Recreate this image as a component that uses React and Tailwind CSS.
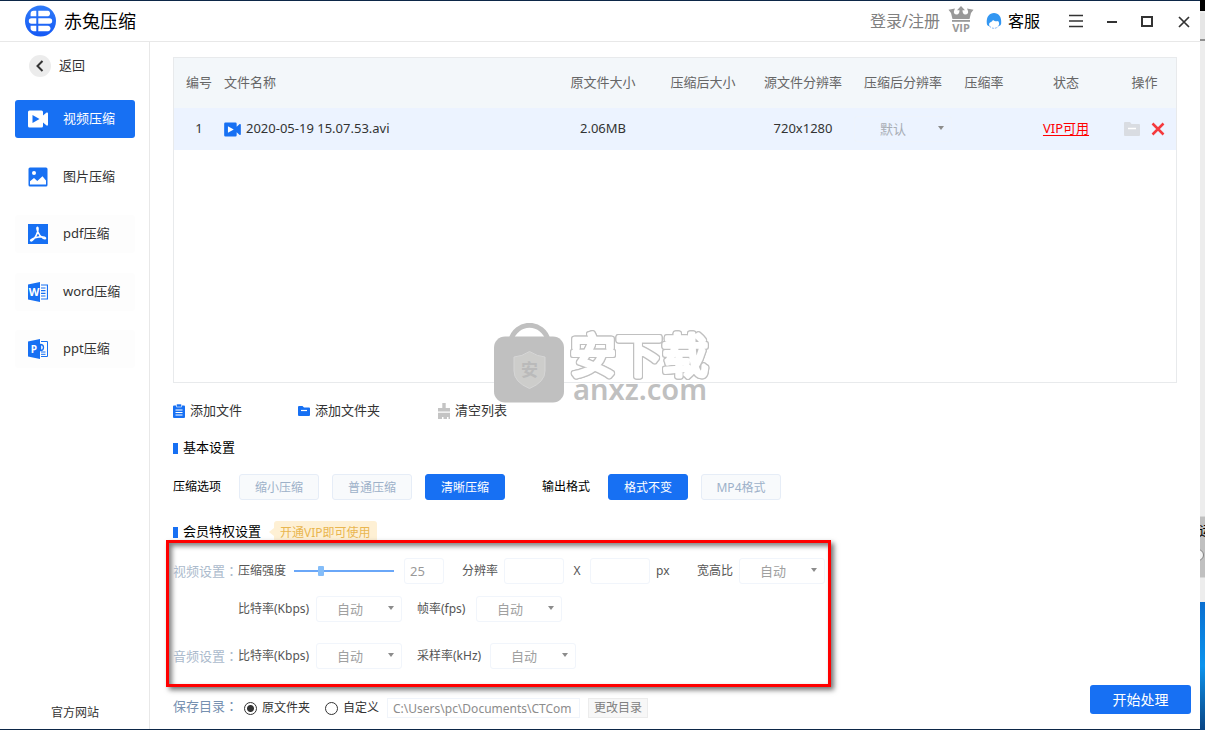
import React, { useState } from 'react';

const LogoIcon = () => (
    <svg viewBox="0 0 32 32" className="w-8 h-8 shrink-0">
        <defs>
            <linearGradient id="logo" x1="0" y1="0" x2="0" y2="1">
                <stop offset="0" stopColor="#2f7bf8" />
                <stop offset="1" stopColor="#1559f5" />
            </linearGradient>
        </defs>
        <circle cx="15.500" cy="16" r="15.500" fill="url(#logo)" />
        <g fill="#fff">
            <path d="M11.3 5.8H8.6a3 3 0 0 0-3 3V11.300h5.700zM13.300 5.800h10a3 3 0 0 1 0 5.500h-10z" />
            <path d="M11.300 13.300H6.500a2.700 2.700 0 0 0 0 5.400h4.800zM13.300 13.300h11.200a2.700 2.700 0 0 1 0 5.400H13.300z" />
            <path d="M11.300 20.700H5.600v1.500a3.500 3.500 0 0 0 3 4h2.700zM13.300 20.700h10a2.800 2.800 0 0 1 0 5.500h-10z" />
        </g>
    </svg>
);

const VideoIcon = ({ className, bg, fg }) => (
    <svg viewBox="0 0 20 18" className={className}>
        <path d="M1.500 0.500h12a1.500 1.500 0 0 1 1.500 1.500v3.600l3.600-3.100q1.400-.5 1.400 1v11q0 1.500-1.400 1L15 12.400V16a1.500 1.500 0 0 1-1.500 1.500h-12A1.500 1.500 0 0 1 0 16V2A1.500 1.500 0 0 1 1.500.5z" fill={bg} />
        <path d="M4.500 5l7 4-7 4z" fill={fg} />
    </svg>
);

const ImageIcon = () => (
    <svg viewBox="0 0 20 20" className="w-5 h-5">
        <rect x="0.500" y="0.500" width="19" height="19" rx="1.500" fill="#1770f3" />
        <circle cx="6" cy="6" r="2" fill="#fff" />
        <path d="M2 17.500v-3.200l4-3.300 3.300 3 5.200-4.800 3.500 4.300v4z" fill="#fff" />
    </svg>
);

const PdfIcon = () => (
    <svg viewBox="0 0 20 20" className="w-5 h-5">
        <rect width="20" height="20" fill="#1770f3" />
        <path
            d="M9.600 3.200c-1 0-.9 2 .2 4.500.8 2.200 3 5.300 5.500 6.700 1.500.7 2.500.4 2.200-.4-.4-.9-3.500-1.500-6.700-1.100-3.300.4-6.700 1.700-8 3.100-.6.800.3 1.300 1.500.4 2-1.500 4.300-5.300 5.300-8.600.6-2.300.7-4.500 0-4.600z"
            fill="none" stroke="#fff" strokeWidth="1.500"
        />
    </svg>
);

const WordIcon = () => (
    <svg viewBox="0 0 20 20" className="w-5 h-5">
        <path d="M0 2.500L12 0v20L0 17.500z" fill="#1770f3" />
        <path d="M13 3h6.500v14H13M13 6h4.500M13 8.700h4.500M13 11.300h4.500M13 14h4.500" fill="none" stroke="#1770f3" strokeWidth="1.200" />
        <text x="6" y="13.800" textAnchor="middle" fontSize="11" fontWeight="700" fontFamily="Open Sans, sans-serif" fill="#fff">W</text>
    </svg>
);

const PptIcon = () => (
    <svg viewBox="0 0 20 20" className="w-5 h-5">
        <path d="M0 2.500L12 0v20L0 17.500z" fill="#1770f3" />
        <path d="M13 2.500h6.500v15H13M13 13h4.500M13 15.300h4.500" fill="none" stroke="#1770f3" strokeWidth="1" />
        <path d="M12.500 5.500a3 3 0 1 1 0 6z" fill="none" stroke="#1770f3" strokeWidth="1.300" />
        <text x="5.800" y="13.500" textAnchor="middle" fontSize="10" fontWeight="700" fontFamily="Open Sans, sans-serif" fill="#fff">P</text>
    </svg>
);

const CrownIcon = () => (
    <svg viewBox="0 0 26 26" className="w-[26px] h-[26px]">
        <g fill="#999">
            <path d="M13 0l4 4.300h-2.500c0 2.500.8 4.200 2.800 4.200 2.200 0 3.300-1.500 2.700-3.500l-1-2.500 6.500 1.200-2.500 3.300L21.500 13h-17L3 7 .5 3.700 7 2.500 6 5c-.6 2 .5 3.500 2.700 3.500 2 0 2.800-1.700 2.800-4.200H9z" />
            <rect x="4" y="14" width="18" height="1.800" />
            <text x="13" y="25.500" textAnchor="middle" fontSize="11" fontWeight="700" fontFamily="Open Sans, sans-serif">VIP</text>
        </g>
    </svg>
);

const ServiceIcon = () => (
    <svg viewBox="0 0 16 18" className="w-4 h-[18px]">
        <circle cx="8" cy="10.500" r="5.800" fill="#fff" stroke="#7fb4f5" strokeWidth="1" strokeDasharray="2 1" />
        <path d="M.8 11.500C.2 4.500 3.500 1 8 1s7.800 3.500 7.200 10.500c-.3 1.800-1.600 2.500-2.600 2.500 1-2 .6-4-.6-5-2 .6-3.500 0-5-1-1 2-3 2-3.800 3.500-.3 1 0 2 .4 2.700C2 14.200 1 13.500.8 11.500z" fill="#3397f2" />
    </svg>
);

const Caret = () => (
    <svg viewBox="0 0 6 4" className="absolute right-2 top-1/2 -mt-[3px] w-[6px] h-1 pointer-events-none">
        <path d="M0 0h6L3 4z" fill="#8c8c8c" />
    </svg>
);

const Dropdown = ({ label, value, className }) => (
    <span className={`relative inline-block ${className}`}>
        <select
            aria-label={label}
            className="block w-full h-[26px] pl-5 appearance-none rounded-[3px] border border-[#f1f5fb] bg-transparent text-[13px] leading-6 text-[#a0a0a0]"
        >
            <option>{value}</option>
        </select>
        <Caret />
    </span>
);

const GroupLabel = ({ children, className }) => (
    <span className={`w-[65px] shrink-0 whitespace-nowrap text-[13px] ${className}`}>
        {children}
        <span className="font-['Noto_Sans_CJK_TC',sans-serif]">：</span>
    </span>
);

const SectionTitle = ({ children }) => (
    <h2 className="flex items-center gap-[5px] text-[13px] text-black">
        <span className="w-[5px] h-[11px] bg-[#1770f3]"></span>
        {children}
    </h2>
);

const OptionButton = ({ active, onClick, children }) => (
    <button
        onClick={onClick}
        className={`w-20 h-[26px] pt-px rounded-[3px] border text-xs ${
            active ? 'bg-[#1770f3] border-[#1770f3] text-white' : 'bg-[#f8fafc] border-[#e6edf7] text-[#9db1c9]'
        }`}
    >
        {children}
    </button>
);

const navItems = [
    { name: '视频压缩', icon: <VideoIcon className="w-5 h-[18px]" bg="#fff" fg="#1770f3" />, style: 'bg-[#1770f3] text-white' },
    { name: '图片压缩', icon: <ImageIcon />, style: 'text-[#333]' },
    { name: 'pdf压缩', icon: <PdfIcon />, style: 'bg-[#fdfdfd] text-[#333]' },
    { name: 'word压缩', icon: <WordIcon />, style: 'bg-[#fdfdfd] text-[#333]' },
    { name: 'ppt压缩', icon: <PptIcon />, style: 'bg-[#fdfdfd] text-[#333]' },
];

const Header = () => (
    <header className="flex items-center h-[41px] pl-[25px] pr-2 border-b border-[#e8e8e8]">
        <LogoIcon />
        <h1 className="ml-[7px] text-lg leading-6 text-black">赤兔压缩</h1>
        <div className="ml-auto flex items-center">
            <a href="#login" className="text-base text-[#808080]">登录/注册</a>
            <button aria-label="VIP" className="ml-2 -mt-1"><CrownIcon /></button>
            <a href="#service" className="ml-3 flex items-center gap-[6px] text-base text-black">
                <ServiceIcon />
                客服
            </a>
            <div className="ml-7 flex items-center gap-5">
                <button aria-label="菜单">
                    <svg viewBox="0 0 16 16" className="w-4 h-4" stroke="#333" strokeWidth="1.500"><path d="M1 2.500h14M1 8h14M1 13.500h14" /></svg>
                </button>
                <button aria-label="最小化">
                    <svg viewBox="0 0 16 16" className="w-4 h-4" stroke="#333" strokeWidth="2"><path d="M3 9h10" /></svg>
                </button>
                <button aria-label="最大化">
                    <svg viewBox="0 0 16 16" className="w-4 h-4" stroke="#333" strokeWidth="2" fill="none"><path d="M2 4h10v9H2z" /></svg>
                </button>
                <button aria-label="关闭">
                    <svg viewBox="0 0 16 16" className="w-4 h-4" stroke="#333" strokeWidth="1.700"><path d="M3 4l10 10M13 4L3 14" /></svg>
                </button>
            </div>
        </div>
    </header>
);

const Sidebar = () => (
    <aside className="flex flex-col w-[150px] shrink-0 px-[15px] pt-[13px] pb-[7px] border-r border-[#e8e8e8]">
        <button className="flex items-center gap-2 pl-[14px] text-[13px] text-[#333]">
            <span className="flex items-center justify-center w-[22px] h-[22px] rounded-full bg-[#ececec]">
                <svg viewBox="0 0 10 12" className="w-[10px] h-3" fill="none" stroke="#333" strokeWidth="2"><path d="M7.500 1L2.500 6l5 5" /></svg>
            </span>
            返回
        </button>
        <nav className="mt-[23px] h-[268px] w-[120px] flex flex-col justify-between">
            {navItems.map((item) => (
                <a
                    key={item.name}
                    href="#nav"
                    className={`flex items-center gap-[15px] h-[38px] pl-[13px] rounded-[3px] text-[13px] ${item.style}`}
                >
                    {item.icon}
                    {item.name}
                </a>
            ))}
        </nav>
        <a href="#site" className="mt-auto w-[120px] text-center text-xs leading-[18px] text-[#333]">官方网站</a>
    </aside>
);

const FileTable = () => (
    <div className="flex-1 mr-[23px] border border-[#e8eaec]">
        <table className="w-full table-fixed text-[13px] text-center">
            <colgroup>
                <col className="w-[50px]" />
                <col />
                <col className="w-[100px]" />
                <col className="w-[100px]" />
                <col className="w-[100px]" />
                <col className="w-[100px]" />
                <col className="w-[62px]" />
                <col className="w-[102px]" />
                <col className="w-[59px]" />
            </colgroup>
            <thead>
                <tr className="h-[50px] bg-[#f3f7fa] text-[#666] [&>th]:font-normal">
                    <th>编号</th>
                    <th className="text-left">文件名称</th>
                    <th>原文件大小</th>
                    <th>压缩后大小</th>
                    <th>源文件分辨率</th>
                    <th>压缩后分辨率</th>
                    <th>压缩率</th>
                    <th>状态</th>
                    <th className="pr-1">操作</th>
                </tr>
            </thead>
            <tbody>
                <tr className="h-[42px] bg-[#ecf3ff] text-[#333]">
                    <td>1</td>
                    <td>
                        <div className="flex items-center gap-[5px]">
                            <VideoIcon className="w-[17px] h-[15px]" bg="#1770f3" fg="#fff" />
                            2020-05-19 15.07.53.avi
                        </div>
                    </td>
                    <td>2.06MB</td>
                    <td></td>
                    <td>720x1280</td>
                    <td>
                        <span className="relative block mx-px">
                            <select aria-label="压缩后分辨率" className="block w-full h-[26px] pl-[25px] appearance-none rounded-[3px] border border-[#eef3fc] text-[13px] leading-6 text-[#a8adb5]">
                                <option>默认</option>
                            </select>
                            <Caret />
                        </span>
                    </td>
                    <td></td>
                    <td><a href="#vip" className="text-[#ff0000] underline underline-offset-2">VIP可用</a></td>
                    <td className="pr-1">
                        <div className="flex items-center justify-center gap-[11px]">
                            <button aria-label="打开文件夹">
                                <svg viewBox="0 0 16 14" className="w-4 h-[14px]">
                                    <path d="M1 0h5l1.500 2H15a1 1 0 0 1 1 1v10a1 1 0 0 1-1 1H1a1 1 0 0 1-1-1V1a1 1 0 0 1 1-1z" fill="#d9dce2" />
                                    <path d="M4 6.500h8" stroke="#fff" strokeWidth="1.500" />
                                </svg>
                            </button>
                            <button aria-label="删除">
                                <svg viewBox="0 0 14 14" className="w-[14px] h-[14px]" stroke="#f5393d" strokeWidth="2.500"><path d="M1.500 1.500l11 11M12.500 1.500l-11 11" /></svg>
                            </button>
                        </div>
                    </td>
                </tr>
            </tbody>
        </table>
    </div>
);

const Actions = () => (
    <div className="flex items-center h-5 mt-[18px] text-[13px] text-[#333]">
        <button className="flex items-center gap-[5px] w-[125px]">
            <svg viewBox="0 0 12 14" className="w-3 h-[14px]">
                <path d="M1 1.500h10a1 1 0 0 1 1 1V13a1 1 0 0 1-1 1H1a1 1 0 0 1-1-1V2.500a1 1 0 0 1 1-1z" fill="#1770f3" />
                <path d="M3.500 0h5v3h-5z" fill="#1770f3" stroke="#fff" strokeWidth=".6" />
                <path d="M2.500 6h7M2.500 8.500h7M2.500 11h7" stroke="#fff" strokeWidth="1.100" />
            </svg>
            添加文件
        </button>
        <button className="flex items-center gap-[5px] w-[140px]">
            <svg viewBox="0 0 12 10" className="w-3 h-[10px]">
                <path d="M1 0h3.500L6 1.500h5a1 1 0 0 1 1 1V9a1 1 0 0 1-1 1H1a1 1 0 0 1-1-1V1a1 1 0 0 1 1-1z" fill="#1770f3" />
                <path d="M3 4.500h6" stroke="#fff" strokeWidth="1.200" />
            </svg>
            添加文件夹
        </button>
        <button className="flex items-center gap-[5px]">
            <svg viewBox="0 0 12 16" className="w-3 h-4" fill="#c4c4c4">
                <path d="M4.300 0h3.400v5H12v3.500H0V5h4.300zM0 9.800h12V16h-1.500v-2H9v2H5.500v-2H4v2H0z" />
            </svg>
            清空列表
        </button>
    </div>
);

const textBox = 'h-[26px] rounded-[3px] border border-[#f1f5fb] bg-transparent text-[13px] text-[#999]';

const VipSettings = () => {
    const [strength, setStrength] = useState(25);

    return (
        <div className="-mt-[3px] w-[665px] pt-[15px] pb-[15px] pl-1 border-[3px] border-[#ff0000] text-xs text-[#555] shadow-[3px_3px_5px_rgba(0,0,0,0.55),inset_3px_3px_5px_rgba(0,0,0,0.5)]">
            <div className="flex items-center h-[26px]">
                <GroupLabel className="text-[#abbacc]">视频设置</GroupLabel>
                <label htmlFor="strength">压缩强度</label>
                <input
                    id="strength"
                    type="range"
                    value={strength}
                    onChange={(e) => setStrength(e.target.value)}
                    className="ml-2 w-[100px] h-[10px] appearance-none bg-transparent [&::-webkit-slider-runnable-track]:h-[2px] [&::-webkit-slider-runnable-track]:bg-[#6aa7f8] [&::-webkit-slider-thumb]:appearance-none [&::-webkit-slider-thumb]:-mt-1 [&::-webkit-slider-thumb]:w-[6px] [&::-webkit-slider-thumb]:h-[10px] [&::-webkit-slider-thumb]:rounded-[1px] [&::-webkit-slider-thumb]:bg-[#84bdf9]"
                />
                <input aria-label="压缩强度值" value={strength} onChange={(e) => setStrength(e.target.value)} className={`ml-[10px] w-10 pl-[5px] ${textBox}`} />
                <label htmlFor="resWidth" className="ml-[18px]">分辨率</label>
                <input id="resWidth" className={`ml-[6px] w-[60px] ${textBox}`} />
                <span className="w-[26px] text-center">X</span>
                <input aria-label="分辨率高" className={`w-[60px] ${textBox}`} />
                <span className="ml-[6px] w-[41px]">px</span>
                <span>宽高比</span>
                <Dropdown label="宽高比" value="自动" className="ml-[6px] w-[86px]" />
            </div>
            <div className="flex items-center h-[26px] mt-3 pl-[65px]">
                <span className="w-[78px]">比特率(Kbps)</span>
                <Dropdown label="视频比特率" value="自动" className="w-[86px]" />
                <span className="ml-[15px] w-[59px]">帧率(fps)</span>
                <Dropdown label="帧率" value="自动" className="w-[86px]" />
            </div>
            <div className="flex items-center h-[26px] mt-[21px]">
                <GroupLabel className="text-[#abbacc]">音频设置</GroupLabel>
                <span className="w-[78px]">比特率(Kbps)</span>
                <Dropdown label="音频比特率" value="自动" className="w-[86px]" />
                <span className="ml-[15px] w-[73px]">采样率(kHz)</span>
                <Dropdown label="采样率" value="自动" className="w-[86px]" />
            </div>
        </div>
    );
};

const radioStyle = 'appearance-none w-[13px] h-[13px] rounded-full border border-[#333] checked:bg-[radial-gradient(circle,#333_0_3px,#fff_4px)]';

const SaveRow = () => (
    <div className="flex items-center h-5 mt-[11px] pl-[7px] text-xs text-[#333]">
        <GroupLabel className="-mt-1 text-[#7690b0]">保存目录</GroupLabel>
        <label className="flex items-center gap-[5px] ml-[6px]">
            <input type="radio" name="dir" defaultChecked className={radioStyle} />
            原文件夹
        </label>
        <label className="flex items-center gap-[5px] ml-[15px]">
            <input type="radio" name="dir" className={radioStyle} />
            自定义
        </label>
        <div className="ml-2 w-[193px] h-5 px-[5px] border border-[#f0f4fa]">
            <input
                aria-label="保存目录"
                readOnly
                value="C:\Users\pc\Documents\CTCom"
                className="block w-full h-[18px] text-xs text-[#8c8c8c]"
            />
        </div>
        <button className="ml-2 w-[60px] h-5 border border-[#ececec] bg-[#f7f7f7] text-xs leading-[18px] text-[#808080]">更改目录</button>
    </div>
);

const Watermark = () => (
    <div className="absolute left-[344px] bottom-[326px] flex items-end gap-[3px] pointer-events-none">
        <svg viewBox="0 0 70 80" className="w-[70px] h-20">
            <path d="M17 17a19 19 0 0 1 37 0" fill="none" stroke="#c0c0c0" strokeWidth="5" />
            <rect y="13.500" width="70" height="66" rx="11" fill="#c0c0c0" />
            <path d="M35.500 28.500q8 5 15.500 5.500v14q0 11-15.500 17.500Q20 59 20 48V34q8-.5 15.500-5.500z" fill="#cdcdcb" stroke="#d6d6d6" />
            <text x="35.500" y="53" textAnchor="middle" fontSize="17" fontWeight="700" fontFamily="Noto Sans CJK SC, sans-serif" fill="#bababa">安</text>
        </svg>
        <div className="flex flex-col">
            <svg viewBox="0 0 144 50" className="w-36 h-[50px] overflow-visible [filter:drop-shadow(1px_0_#c0c0c0)_drop-shadow(-1px_0_#c0c0c0)_drop-shadow(0_1px_#c0c0c0)_drop-shadow(0_-1px_#c0c0c0)]">
                <text x="3" y="47" fontSize="46" fontWeight="400" fontFamily="Noto Sans CJK SC, sans-serif" fill="#fff" stroke="#fff" strokeWidth="4" strokeLinejoin="round">安下载</text>
            </svg>
            <span className="pl-[6px] text-[29px] leading-[28px] font-semibold text-[#c0c0c0]">anxz.com</span>
        </div>
    </div>
);

// slice of the desktop that stays visible beside the window
const DesktopEdge = () => (
    <div className="flex flex-col w-[5px] shrink-0 overflow-hidden bg-[#ededed]">
        <div className="h-[11px] bg-black"></div>
        <div className="h-7 mt-[2px] bg-[#e6e6e6] border-b-2 border-[#8f8f8f]"></div>
        <div className="flex-1"></div>
        <div className="h-[62px] pt-[5px] bg-[#c0c0c0] border-y border-[#d8d8d8] text-[13px] leading-4 text-black whitespace-nowrap">
            <div className="-ml-px">运</div>
            <div className="mt-[11px] -ml-2 w-3 h-3 rounded-full border border-[#808080] bg-[#f4f4f4]"></div>
        </div>
        <div className="h-6"></div>
        <div className="h-[128px] bg-gradient-to-b from-[#0b6fd0] via-[#0c94ee] to-[#0a4584]"></div>
    </div>
);

const App = () => {
    const [mode, setMode] = useState('清晰压缩');
    const [format, setFormat] = useState('格式不变');

    return (
        <div className="flex min-h-screen bg-white font-['Noto_Sans','Noto_Sans_CJK_SC',sans-serif]">
            <div className="flex flex-col flex-1 border-y border-[#0c2748]">
                <Header />
                <div className="flex flex-1">
                    <Sidebar />
                    <main className="relative flex flex-col flex-1 pt-[15px] pl-4 pb-[11px]">
                        <div className="flex flex-col flex-1 pl-[7px]">
                            <FileTable />
                            <Actions />
                            <div className="mt-[17px] h-5 flex items-center">
                                <SectionTitle>基本设置</SectionTitle>
                            </div>
                            <div className="flex items-center mt-4 text-xs text-black">
                                <span className="w-[66px]">压缩选项</span>
                                <div className="flex gap-[13px]">
                                    {['缩小压缩', '普通压缩', '清晰压缩'].map((name) => (
                                        <OptionButton key={name} active={mode === name} onClick={() => setMode(name)}>{name}</OptionButton>
                                    ))}
                                </div>
                                <span className="ml-[37px] w-[66px]">输出格式</span>
                                <div className="flex gap-[13px]">
                                    {['格式不变', 'MP4格式'].map((name) => (
                                        <OptionButton key={name} active={format === name} onClick={() => setFormat(name)}>{name}</OptionButton>
                                    ))}
                                </div>
                            </div>
                            <div className="mt-[21px] h-[22px] flex items-center">
                                <SectionTitle>会员特权设置</SectionTitle>
                                <svg viewBox="0 0 5 8" className="ml-2 w-[5px] h-2"><path d="M5 0v8L0 4z" fill="#fef0d4" /></svg>
                                <a href="#vip" className="h-[22px] px-[6px] rounded-[3px] bg-[#fef0d4] text-xs leading-6 text-[#e9b650]">开通VIP即可使用</a>
                            </div>
                        </div>
                        <div className="flex items-end justify-between">
                            <div>
                                <VipSettings />
                                <SaveRow />
                            </div>
                            <button className="mb-1 mr-[9px] w-[101px] h-[29px] rounded-[3px] bg-[#1770f3] text-sm text-white">开始处理</button>
                        </div>
                        <Watermark />
                    </main>
                </div>
            </div>
            <DesktopEdge />
        </div>
    );
};

export default App;
